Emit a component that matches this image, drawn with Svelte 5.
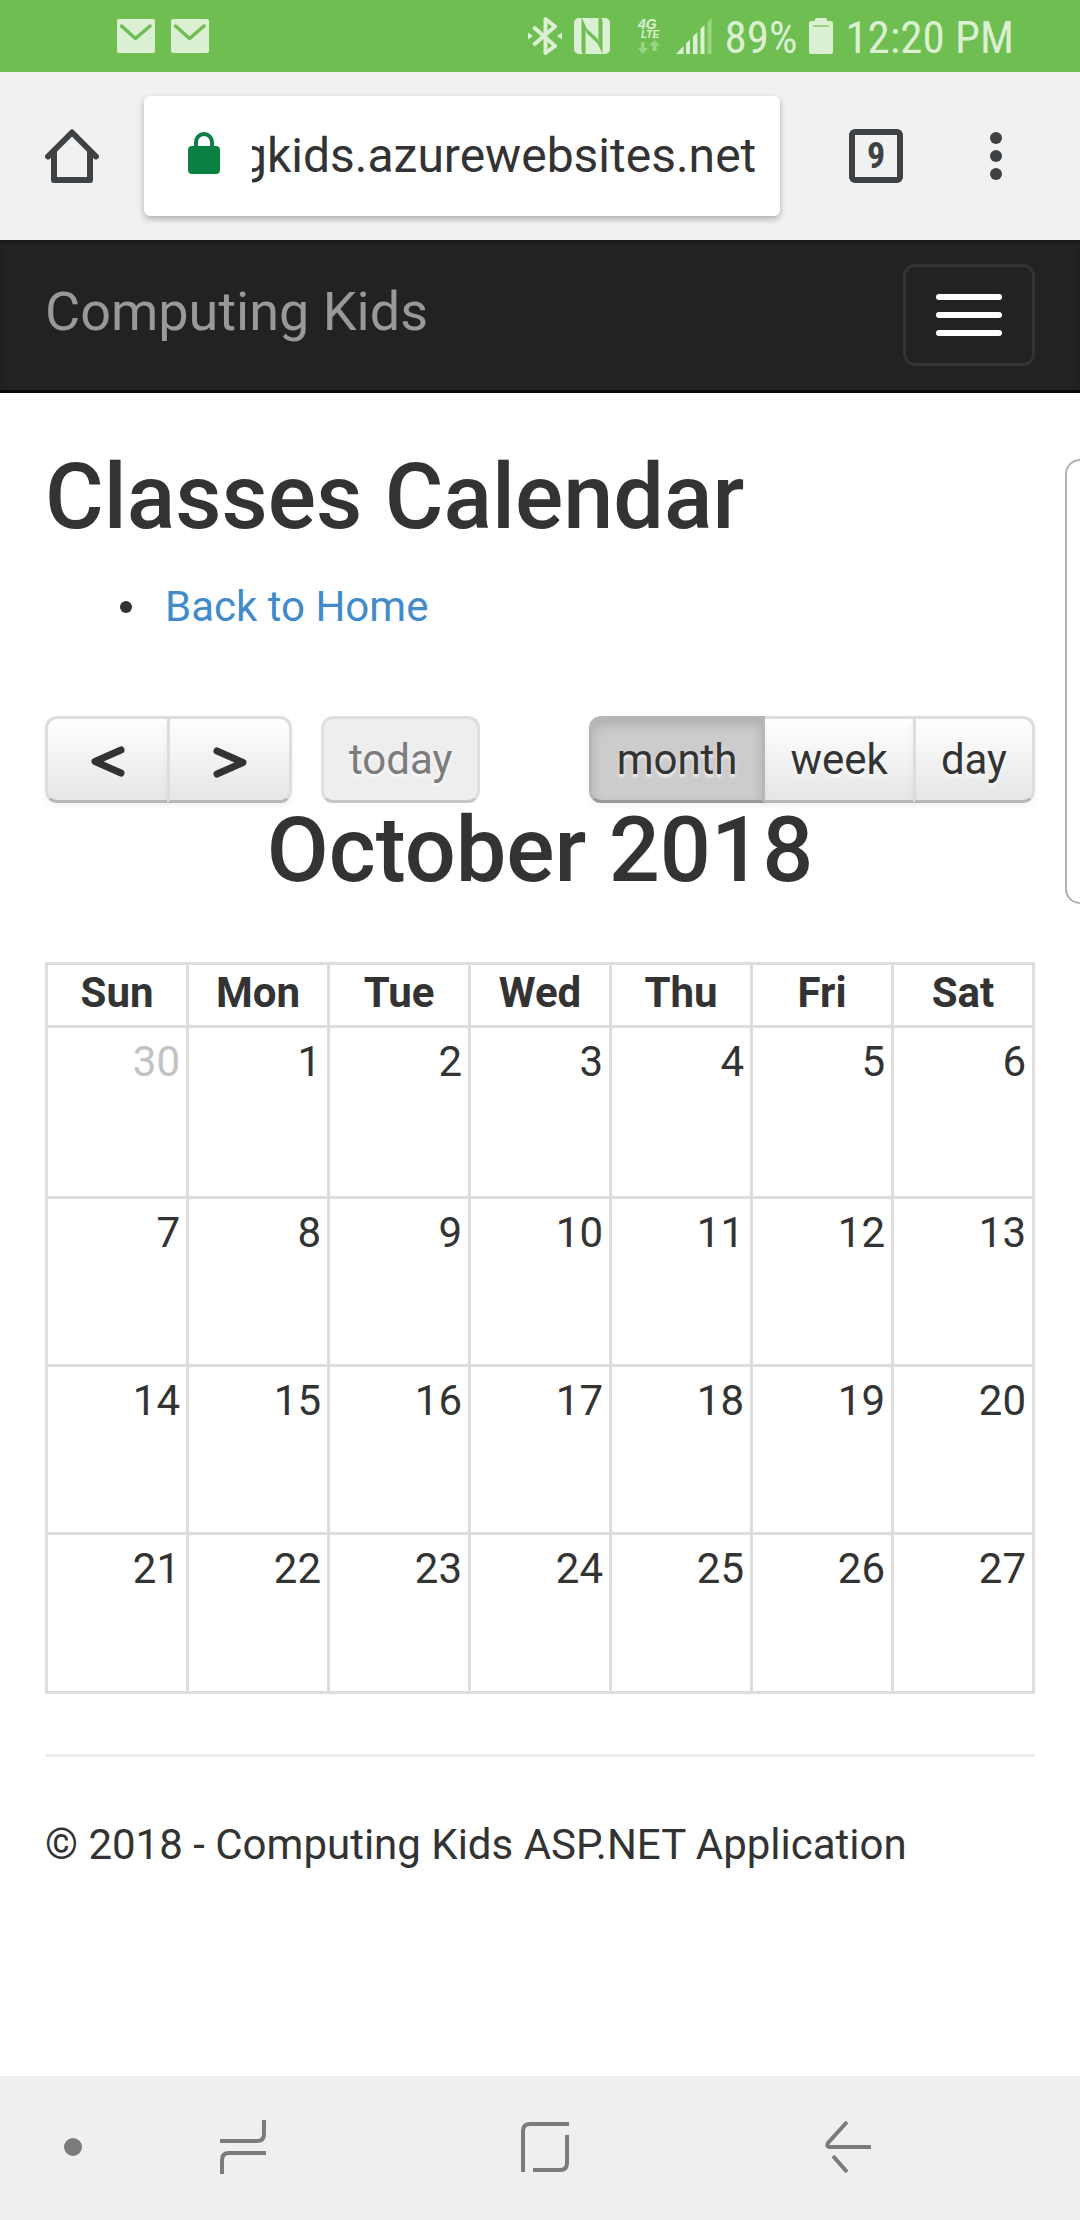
<script lang="ts">
  const days = ['Sun', 'Mon', 'Tue', 'Wed', 'Thu', 'Fri', 'Sat'];
  const weeks = [
    [30, 1, 2, 3, 4, 5, 6],
    [7, 8, 9, 10, 11, 12, 13],
    [14, 15, 16, 17, 18, 19, 20],
    [21, 22, 23, 24, 25, 26, 27],
  ];
  const views = ['month', 'week', 'day'];
  let view = $state('month');
  let address = $state('gkids.azurewebsites.net');
</script>

<div class="page">
  <div class="status">
    <div class="notices">
      {#each [1, 2] as n (n)}
        <svg width="38" height="34" viewBox="0 0 38 34" aria-hidden="true">
          <rect width="38" height="34" rx="2" fill="#dbefd3" />
          <path d="M4.500 7L18.500 19.500L33 7" fill="none" stroke="#6ebe52" stroke-width="3.500" stroke-linecap="round" stroke-linejoin="round" />
        </svg>
      {/each}
    </div>
    <div class="signals">
      <svg width="34" height="38" viewBox="0 0 34 38" fill="none" aria-hidden="true">
        <path d="M5.500 10L27 29L17.500 36V2L27 9.500L5.500 28" stroke="#dbefd3" stroke-width="4" stroke-linejoin="round" />
        <path d="M0 15.500L5 19L0 22.500ZM34 15.500L29 19L34 22.500Z" fill="#dbefd3" />
      </svg>
      <svg class="nfc" width="36" height="36" viewBox="0 0 36 36" fill="none" aria-hidden="true">
        <rect width="36" height="36" rx="5" fill="#dbefd3" />
        <path d="M7.500 0V31Q7.500 35 9 36H11.500V12.500L24 26V21L12.500 10.500L8.500 1ZM28.500 36V5Q28.500 1 27 0H24.500V23.500L12.500 11.500V15L24 26L28 35Z" fill="#6ebe52" />
      </svg>
      <svg class="lte" width="24" height="38" viewBox="0 0 24 38" aria-hidden="true">
        <text x="0" y="12" font-size="14" font-weight="900" font-style="italic" fill="#dbefd3">4G</text>
        <text x="3" y="21" font-size="10" font-weight="900" font-style="italic" fill="#dbefd3">LTE</text>
        <path d="M3 25H6.500V31H10L5 37L0 31H3ZM14.500 34V28.500H11L16.500 23L22 28.500H18.500V34Z" fill="#9bd487" />
      </svg>
      <svg class="bars" width="36" height="36" viewBox="0 0 36 36" aria-hidden="true">
        <path d="M0 36L7.500 28V36ZM10 36V25.500L14 21.500V36ZM17 36V18.500L21.500 14V36ZM24.500 36V11L28.500 7V36Z" fill="#dbefd3" />
        <path d="M31.500 36V4L35.500 0V36Z" fill="#9bd487" />
      </svg>
      <span>89%</span>
      <svg width="24" height="36" viewBox="0 0 24 36" aria-hidden="true">
        <path d="M6 3V1.500Q6 0 7.500 0H16.500Q18 0 18 1.500V3H22Q24 3 24 5V34Q24 36 22 36H2Q0 36 0 34V5Q0 3 2 3Z" fill="#dbefd3" />
        <path d="M4 8H20" stroke="#9bd487" stroke-width="2" />
      </svg>
      <span>12:20 PM</span>
    </div>
  </div>

  <div class="browser">
    <button class="home" aria-label="Home page">
      <svg width="54" height="54" viewBox="0 0 54 54" fill="none" stroke="#3e4245" stroke-width="6" stroke-linecap="round" stroke-linejoin="round" aria-hidden="true">
        <path d="M3 27.500L27 3.500L51 27.500M9 23V51H45V23" />
      </svg>
    </button>
    <label class="address">
      <svg width="32" height="42" viewBox="0 0 32 42" aria-hidden="true">
        <rect y="14" width="32" height="28" rx="4" fill="#0b8043" />
        <path d="M8 16V10A8 8 0 0 1 24 10V16" fill="none" stroke="#0b8043" stroke-width="4" />
      </svg>
      <input type="text" aria-label="Address" bind:value={address} />
    </label>
    <button class="tool" aria-label="Open tabs"><span class="tabs">9</span></button>
    <button class="tool" aria-label="More options">
      <svg width="12" height="48" viewBox="0 0 12 48" fill="#3e4245" aria-hidden="true">
        <circle cx="6" cy="6" r="6" /><circle cx="6" cy="24" r="6" /><circle cx="6" cy="42" r="6" />
      </svg>
    </button>
  </div>

  <nav class="navbar">
    <a class="brand" href="#home">Computing Kids</a>
    <button class="toggle" aria-label="Toggle navigation"><i></i><i></i><i></i></button>
  </nav>

  <main>
    <h2>Classes Calendar</h2>
    <ul>
      <li><a href="#home">Back to Home</a></li>
    </ul>

    <div class="toolbar">
      <div class="group">
        <button class="btn arrow" aria-label="Previous">
          <svg width="34" height="32" viewBox="0 0 34 32" aria-hidden="true"><path d="M30 4L4 15.500L30 27" /></svg>
        </button>
        <button class="btn arrow" aria-label="Next">
          <svg width="34" height="32" viewBox="0 0 34 32" aria-hidden="true"><path d="M4 5L30 16.500L4 28" /></svg>
        </button>
      </div>
      <button class="btn today" disabled>today</button>
      <div class="group views">
        {#each views as v (v)}
          <button class="btn" class:active={view === v} onclick={() => (view = v)}>{v}</button>
        {/each}
      </div>
    </div>
    <h2 class="month">October 2018</h2>

    <table>
      <thead>
        <tr>{#each days as d (d)}<th scope="col">{d}</th>{/each}</tr>
      </thead>
      <tbody>
        {#each weeks as week, w (w)}
          <tr>
            {#each week as day (day)}
              <td class:other={w === 0 && day > 7}>{day}</td>
            {/each}
          </tr>
        {/each}
      </tbody>
    </table>

    <hr />
    <footer>© 2018 - Computing Kids ASP.NET Application</footer>
  </main>

  <nav class="system" aria-label="System">
    <button class="dot" aria-label="Hide bar">
      <svg width="18" height="18" viewBox="0 0 18 18" aria-hidden="true"><circle cx="9" cy="9" r="9" fill="#7b7b7b" /></svg>
    </button>
    <button aria-label="Recent apps">
      <svg width="46" height="54" viewBox="0 0 46 54" aria-hidden="true"><path d="M0 21H37Q44 21 44 14V0M46 33H9Q2 33 2 40V54" /></svg>
    </button>
    <button aria-label="Home">
      <svg width="48" height="50" viewBox="0 0 48 50" aria-hidden="true"><path d="M2 50V9Q2 2 9 2H48M46 13V41Q46 48 39 48H12" /></svg>
    </button>
    <button aria-label="Back">
      <svg width="46" height="54" viewBox="0 0 46 54" aria-hidden="true"><path d="M46 27H5Q1 27 3 23L22 2M8 36L22 52" /></svg>
    </button>
  </nav>

  <div class="edge"></div>
</div>

<style>
  :global(body) {
    margin: 0;
    background: #fff;
  }
  .page {
    position: relative;
    display: flex;
    flex-direction: column;
    min-height: 100vh;
    overflow: hidden;
    font: 42px/56px Roboto, sans-serif;
    color: #333;
  }
  button {
    font: inherit;
    color: inherit;
    margin: 0;
    padding: 0;
    border: 0;
    background: none;
  }
  svg {
    display: block;
    flex: none;
  }
  a {
    color: #428bca;
    text-decoration: none;
  }

  .status {
    display: flex;
    justify-content: space-between;
    align-items: center;
    height: 72px;
    padding: 0 66px 0 117px;
    background: #6ebe52;
    color: #dbefd3;
    font-family: "Roboto Condensed", Roboto, sans-serif;
    font-size: 45px;
    white-space: nowrap;
  }
  .status span {
    padding-top: 3px;
  }
  .notices {
    display: flex;
    gap: 16px;
  }
  .signals {
    display: flex;
    align-items: center;
    gap: 12px;
  }
  .lte {
    margin-left: 16px;
    overflow: visible;
    font-family: "Liberation Sans", sans-serif;
  }
  .bars {
    margin-left: 2px;
  }

  .browser {
    display: flex;
    align-items: center;
    padding: 24px 24px 24px 0;
    background: #f1f1f1;
  }
  .home {
    display: grid;
    place-items: center;
    width: 144px;
    height: 120px;
  }
  .address {
    flex: 1;
    min-width: 0;
    display: flex;
    align-items: center;
    gap: 32px;
    height: 120px;
    box-sizing: border-box;
    margin-right: 36px;
    padding: 0 24px 6px 44px;
    border-radius: 6px;
    background: #fff;
    box-shadow: 0 3px 6px rgba(0, 0, 0, 0.28);
  }
  input {
    flex: 1;
    min-width: 0;
    padding: 5px 0 0;
    border: 0;
    outline: 0;
    background: none;
    color: #333;
    font: 48px/60px Roboto, sans-serif;
    text-indent: -12px;
  }
  .tool {
    display: grid;
    place-items: center;
    width: 120px;
    height: 120px;
  }
  .tabs {
    display: grid;
    place-items: center;
    width: 42px;
    height: 42px;
    border: 6px solid #3e4245;
    border-radius: 6px;
    color: #3e4245;
    font: bold 36px/42px "Roboto Condensed", Roboto, sans-serif;
  }

  .navbar {
    display: flex;
    justify-content: space-between;
    align-items: center;
    height: 150px;
    padding: 0 45px;
    border-bottom: 3px solid #080808;
    background: #222;
    box-shadow: inset 0 3px 3px #1b1b1b;
  }
  .brand {
    padding-bottom: 6px;
    color: #999;
    font-size: 54px;
  }
  .toggle {
    display: grid;
    gap: 12px;
    padding: 27px 30px;
    border: 3px solid #333;
    border-radius: 12px;
  }
  .toggle i {
    width: 66px;
    height: 6px;
    border-radius: 3px;
    background: #fff;
  }

  main {
    flex: 1;
    padding: 57px 45px 0;
  }
  h2 {
    margin: 0;
    padding-bottom: 3px;
    font-size: 90px;
    line-height: 96px;
    font-weight: 500;
  }
  ul {
    margin: 30px 0 81px;
    padding-left: 75px;
    list-style: none;
  }
  li {
    display: flex;
    align-items: center;
    gap: 33px;
  }
  li::before {
    content: "";
    width: 12px;
    height: 12px;
    border-radius: 6px;
    background: #333;
  }

  .toolbar {
    display: flex;
    align-items: center;
  }
  .group {
    display: flex;
  }
  .views {
    margin-left: auto;
  }
  .btn {
    display: grid;
    place-items: center;
    height: 87px;
    padding: 0 25px;
    border: 3px solid;
    border-color: #ddd #ddd #b7b7b7;
    border-radius: 12px;
    background: #f5f5f5 linear-gradient(#fff, #e6e6e6);
    background-clip: padding-box;
    box-shadow: 0 3px 6px rgba(0, 0, 0, 0.05);
    text-shadow: 0 3px 3px rgba(255, 255, 255, 0.75);
  }
  .group .btn:not(:first-child) {
    margin-left: -3px;
    border-top-left-radius: 0;
    border-bottom-left-radius: 0;
  }
  .group .btn:not(:last-child) {
    border-top-right-radius: 0;
    border-bottom-right-radius: 0;
  }
  .btn.active {
    position: relative;
    border-color: #b7b7b7 #b7b7b7 #999;
    background: #ccc;
    box-shadow: inset 0 6px 12px rgba(0, 0, 0, 0.15), 0 3px 6px rgba(0, 0, 0, 0.05);
  }
  .arrow {
    width: 125px;
    padding: 5px 0 0;
  }
  .arrow path {
    fill: none;
    stroke: #333;
    stroke-width: 7;
    stroke-linecap: round;
    stroke-linejoin: round;
  }
  .today {
    margin-left: 29px;
    border-color: #dfdfdf #dfdfdf #c6c6c6;
    background: #eee;
    box-shadow: none;
    color: #7c7c7c;
  }
  .month {
    text-align: center;
  }

  table {
    width: 100%;
    margin-top: 60px;
    border-collapse: collapse;
    table-layout: fixed;
  }
  th,
  td {
    box-sizing: border-box;
    border: 3px solid #ddd;
    padding: 0 6px;
    vertical-align: top;
  }
  th {
    height: 63px;
    text-align: center;
    font-weight: 700;
  }
  td {
    height: 168px;
    padding-top: 6px;
    text-align: right;
  }
  tbody tr:first-child td {
    height: 171px;
  }
  tbody tr:last-child td {
    height: 159px;
  }
  .other {
    color: #c2c2c2;
  }

  hr {
    height: 3px;
    margin: 60px 0;
    border: 0;
    background: #eee;
  }

  .system {
    display: flex;
    align-items: center;
    height: 144px;
    padding-right: 81px;
    background: #efefef;
  }
  .system button {
    display: grid;
    place-items: center;
    flex: 1;
    box-sizing: border-box;
    height: 100%;
    padding-bottom: 2px;
  }
  .system .dot {
    flex: none;
    width: 92px;
    padding-left: 54px;
  }
  .system path {
    fill: none;
    stroke: #7b7b7b;
    stroke-width: 4;
  }

  .edge {
    position: absolute;
    top: 459px;
    right: 0;
    width: 13px;
    height: 441px;
    border: 2px solid #b2b2b2;
    border-right: 0;
    border-radius: 18px 0 0 18px;
    background: #fff;
  }
</style>
